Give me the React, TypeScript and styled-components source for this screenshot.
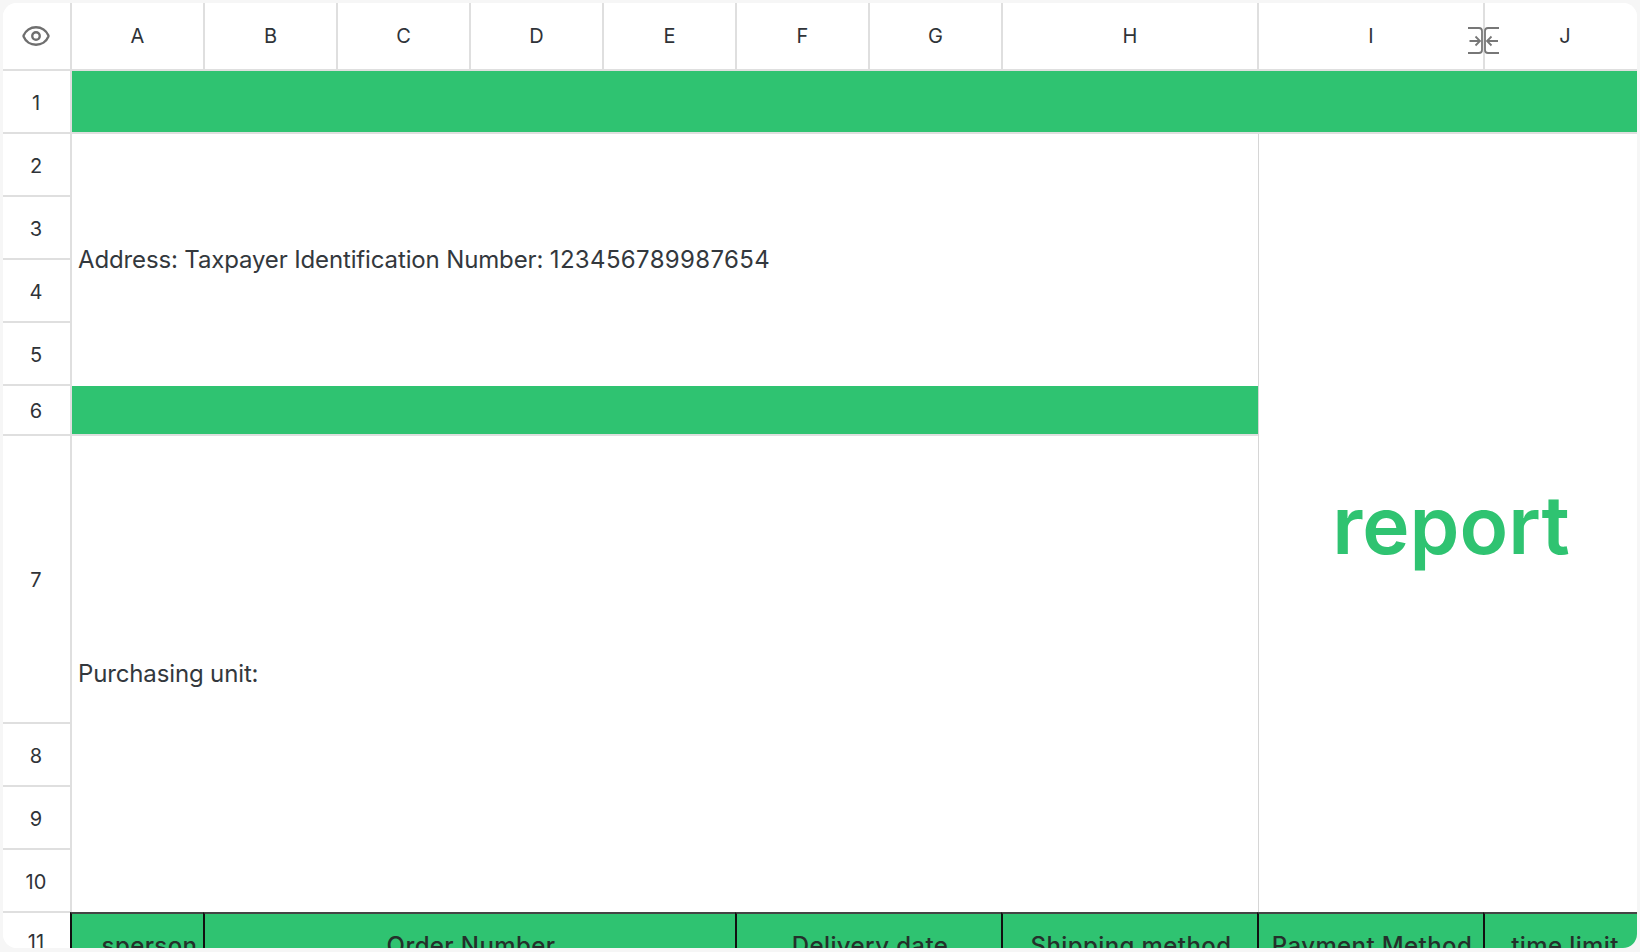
import React from "react";
import styled, { createGlobalStyle } from "styled-components";
import { Eye } from "lucide-react";

const Global = createGlobalStyle`
  html, body { margin: 0; padding: 0; background: #f6f6f6; }
  body { font-family: Inter, "Liberation Sans", sans-serif; color: #33383d; }
`;

const Page = styled.div`
  box-sizing: border-box;
  width: 1640px;
  height: 952px;
  padding: 3px 3px 4px;
  overflow: hidden;
`;

const Card = styled.div`
  height: 945px;
  background: #fff;
  border-radius: 14px;
  overflow: hidden;
`;

const Sheet = styled.div`
  position: relative;
  display: grid;
  grid-template-columns: 69px repeat(7, 133px) 256px 226px 152px;
  grid-template-rows: 68px 63px 63px 63px 63px 63px 50px 288px 63px 63px 63px 63px;
`;

const Head = styled.div`
  box-sizing: border-box;
  display: flex;
  align-items: center;
  justify-content: center;
  font-size: 20px;
  color: #2f3338;
  background: #fff;
`;

const Corner = styled(Head)`
  grid-column: 1;
  grid-row: 1;
  padding-right: 1px;
  border-right: 2px solid #dfdfdf;
  border-bottom: 2px solid #dfdfdf;
  color: #6f6f6f;
`;

const ColumnHead = styled(Head)<{ $col: number; $last?: boolean; $shift?: number }>`
  grid-column: ${(p) => p.$col};
  grid-row: 1;
  padding-left: ${(p) => p.$shift ?? 0}px;
  border-right: ${(p) => (p.$last ? "0" : "2px solid #dfdfdf")};
  border-bottom: 2px solid #dfdfdf;
`;

const RowHead = styled(Head)<{ $row: number; $tight?: boolean }>`
  grid-column: 1;
  grid-row: ${(p) => p.$row};
  padding-right: 1px;
  padding-top: ${(p) => (p.$tight ? "0" : "2px")};
  padding-bottom: ${(p) => (p.$tight ? "5px" : "0")};
  border-right: 2px solid #dfdfdf;
  border-bottom: ${(p) => (p.$tight ? "0" : "2px solid #dfdfdf")};
`;

const GreenBand = styled.div<{ $row: number; $end: number }>`
  box-sizing: border-box;
  grid-column: 2 / ${(p) => p.$end};
  grid-row: ${(p) => p.$row};
  background: #2fc371;
  background-clip: padding-box;
  border-bottom: 2px solid #dfdfdf;
`;

const TextBlock = styled.div<{ $row: string }>`
  grid-column: 2 / 10;
  grid-row: ${(p) => p.$row};
  display: flex;
  align-items: center;
  padding: 0 0 2px 6px;
  font-size: 24px;
  letter-spacing: -0.14px;
  color: #33383d;
  white-space: pre;
`;

const Digits = styled.span`
  letter-spacing: 0.35px;
`;

const TitleBlock = styled.div`
  grid-column: 10 / 12;
  grid-row: 3 / 12;
  display: flex;
  align-items: center;
  justify-content: center;
  margin-left: -1px;
  padding: 1px 0 0 6px;
  border-left: 1px solid #d6d6d6;
  font-size: 80px;
  font-weight: 600;
  color: #2fc371;
`;

const TableHead = styled.div<{ $col: string; $shift?: number }>`
  box-sizing: border-box;
  grid-column: ${(p) => p.$col};
  grid-row: 12;
  display: flex;
  align-items: center;
  justify-content: center;
  margin: -1px 0 0 -2px;
  padding-left: ${(p) => p.$shift ?? 0}px;
  background: #2fc371;
  border-top: 2px solid #444;
  border-left: 2px solid #111;
  font-size: 24px;
  font-weight: 500;
  letter-spacing: 0.4px;
  color: #24302b;
  white-space: nowrap;
`;

const ResizeHandle = styled.svg`
  position: absolute;
  left: 1465px;
  top: 24px;
  width: 31px;
  height: 27px;
  color: #777;
`;

const columns = ["A", "B", "C", "D", "E", "F", "G", "H", "I", "J"];
const rowLabels = [1, 2, 3, 4, 5, 6, 7, 8, 9, 10];
const tableHeads = [
  { col: "2", text: "sperson", shift: 22 },
  { col: "3 / 7", text: "Order Number" },
  { col: "7 / 9", text: "Delivery date" },
  { col: "9", text: "Shipping method" },
  { col: "10", text: "Payment Method" },
  { col: "11", text: "time limit", shift: 8 },
];

export default function App() {
  return (
    <>
      <Global />
      <Page>
        <Card>
          <Sheet>
            <Corner>
              <Eye size={30} strokeWidth={1.9} />
            </Corner>
            {columns.map((c, i) => (
              <ColumnHead key={c} $col={i + 2} $last={c === "J"} $shift={c === "J" ? 8 : 0}>{c}</ColumnHead>
            ))}
            {rowLabels.map((n) => (
              <RowHead key={n} $row={n + 1}>{n}</RowHead>
            ))}
            <RowHead $row={12} $tight>11</RowHead>
            <GreenBand $row={2} $end={12} />
            <TextBlock $row="3 / 7">
              <span>Address: Taxpayer Identification Number: </span>
              <Digits>123456789987654</Digits>
            </TextBlock>
            <GreenBand $row={7} $end={10} />
            <TextBlock $row="8 / 12">Purchasing unit:</TextBlock>
            <TitleBlock>report</TitleBlock>
            {tableHeads.map((h) => (
              <TableHead key={h.col} $col={h.col} $shift={h.shift}>{h.text}</TableHead>
            ))}
            <ResizeHandle viewBox="0 0 31 27" fill="none" stroke="currentColor" strokeWidth="1.8">
              <path d="M0 1h11a3 3 0 0 1 3 3v19a3 3 0 0 1-3 3H0" />
              <path d="M31 1H20a3 3 0 0 0-3 3v19a3 3 0 0 0 3 3h11" />
              <path d="M1.5 14H12M7.5 9.5l4.5 4.5-4.5 4.5" />
              <path d="M30 14H19M23.5 9.5L19 14l4.5 4.5" />
            </ResizeHandle>
          </Sheet>
        </Card>
      </Page>
    </>
  );
}
